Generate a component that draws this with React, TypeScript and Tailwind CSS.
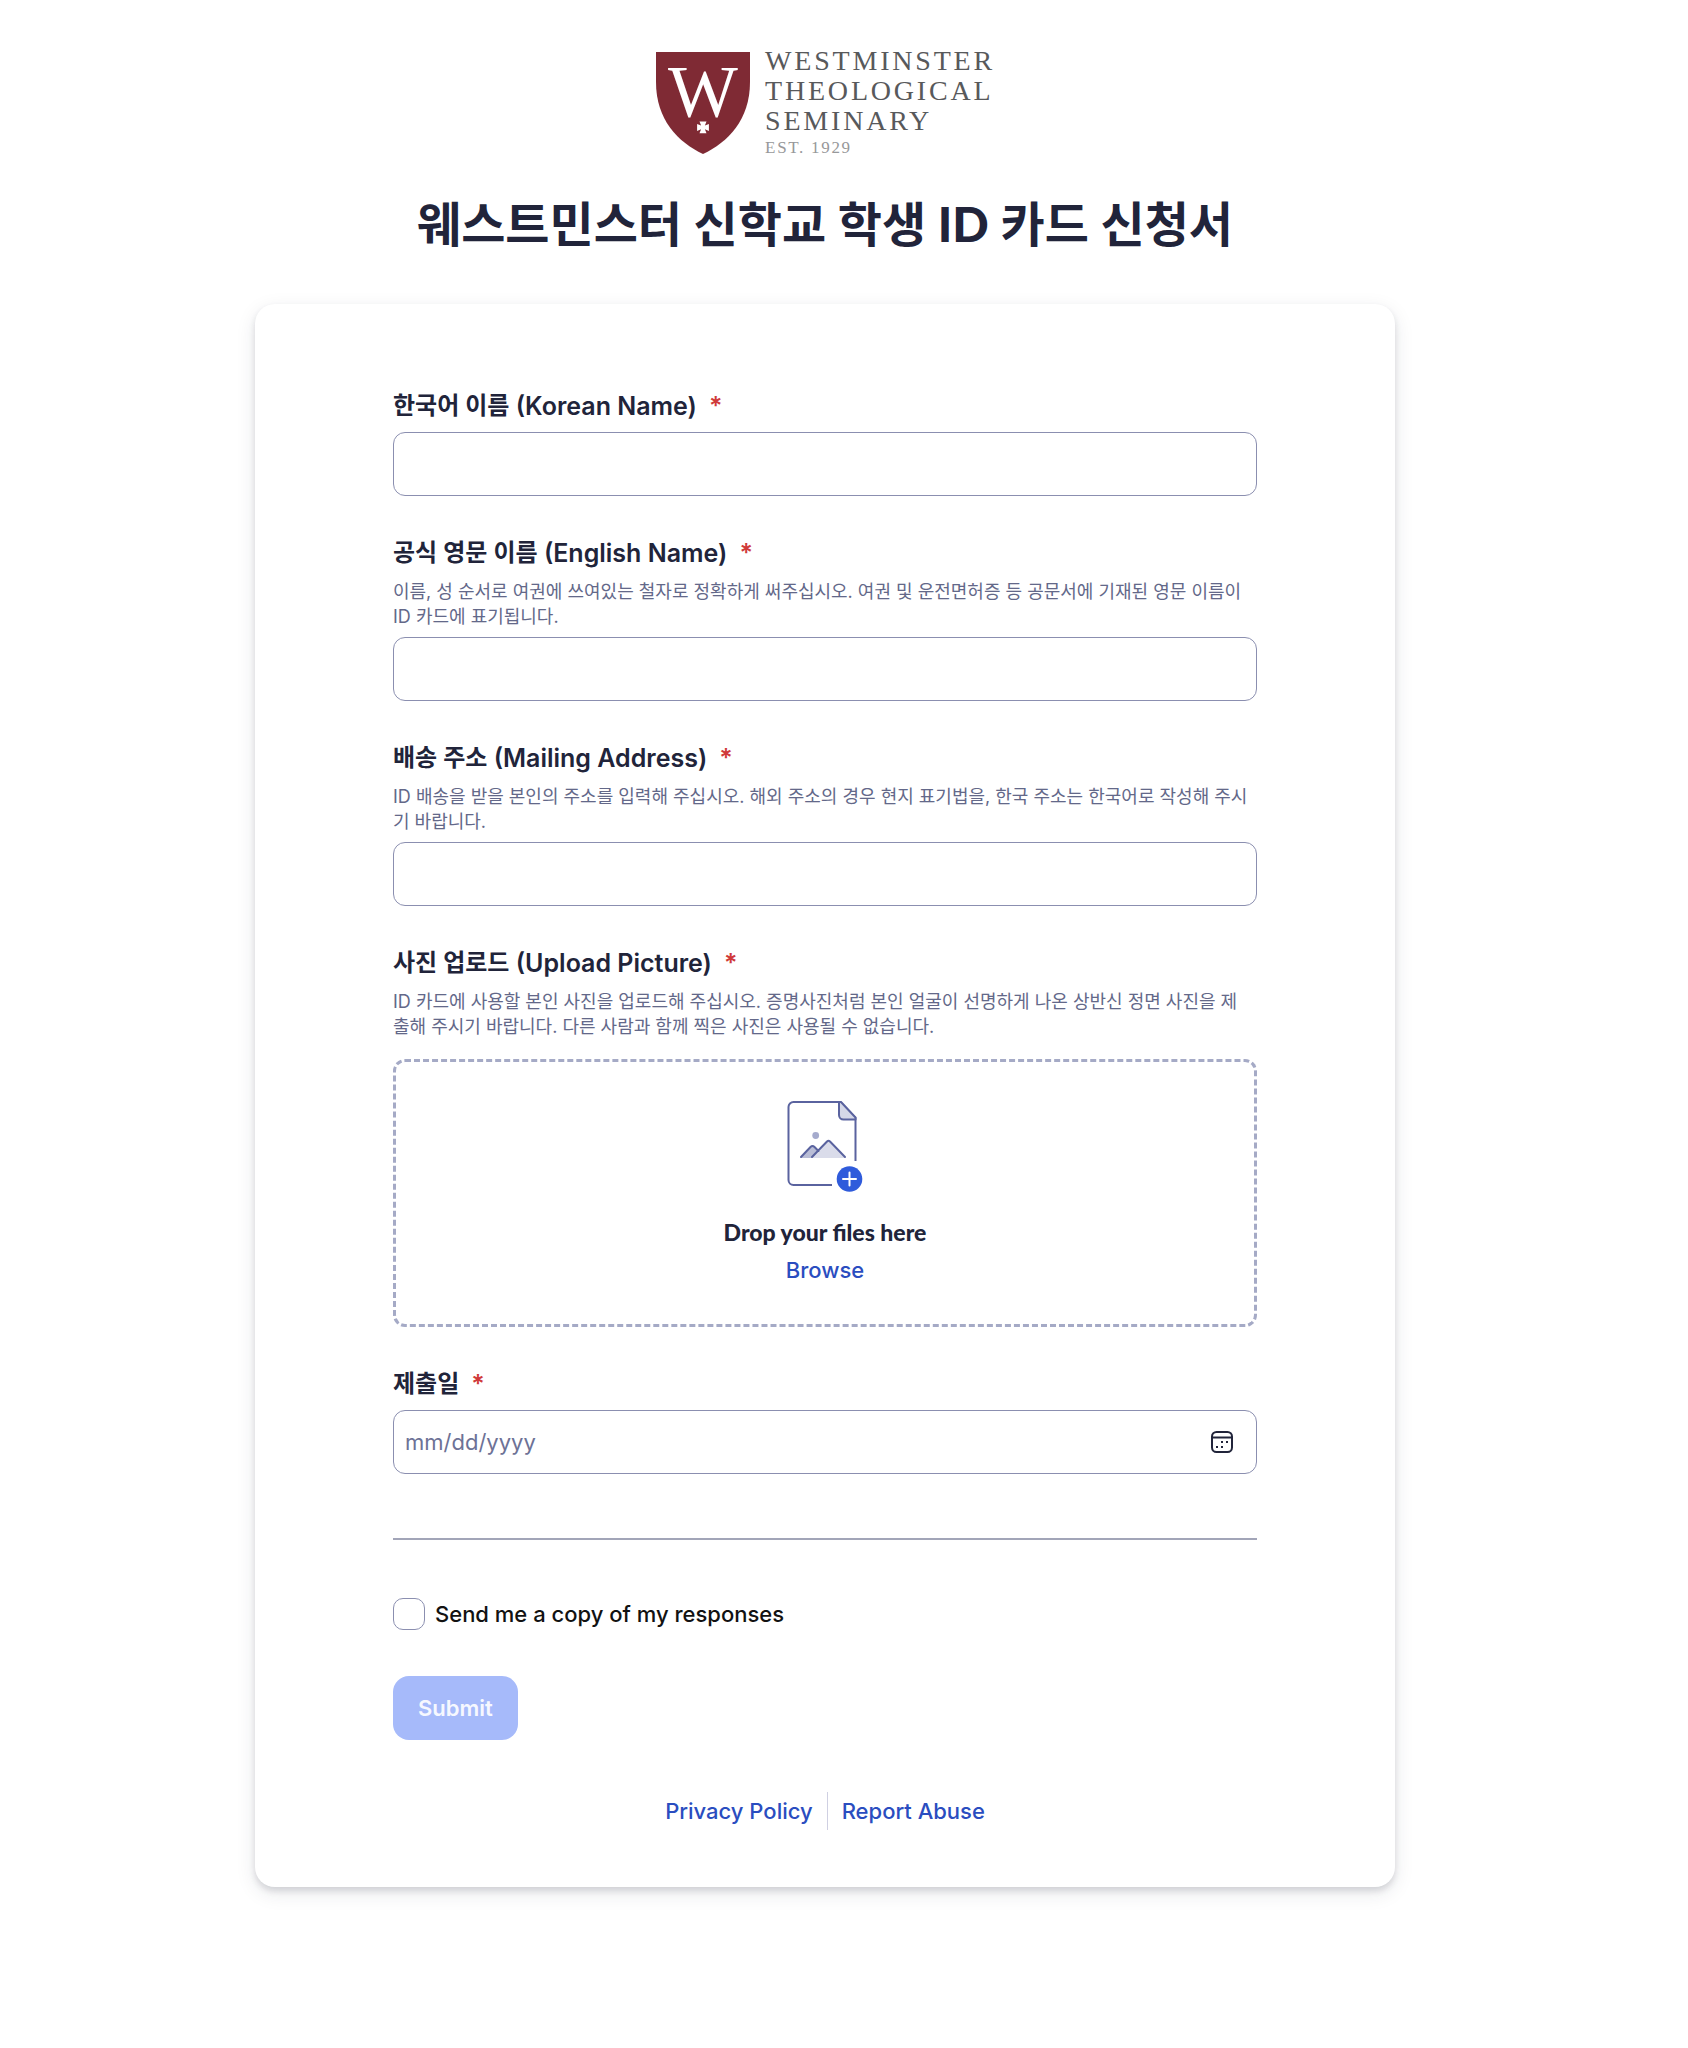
import React, { useState } from 'react';

const inputStyles =
  'block h-16 w-full rounded-xl border border-[#8b8fb0] bg-white px-3 text-[22px] text-[#21243a] outline-none';

interface FieldLabelProps {
  id: string;
  ko: string;
  en?: string;
}

const FieldLabel: React.FC<FieldLabelProps> = ({ id, ko, en }) => (
  <label htmlFor={id} className="flex h-8 items-center whitespace-pre text-[24px] leading-8 font-semibold text-[#21243a]">
    <span>{ko}</span>
    {en && <span className="text-[25px]"> {en}</span>}
    <span className="ml-3 text-[25px] text-[#d03a3a]">*</span>
  </label>
);

interface HintProps {
  id: string;
  lines: string[];
}

const Hint: React.FC<HintProps> = ({ id, lines }) => (
  <p id={id} className="mt-[10px] text-[18px] leading-[25px] text-[#636889] sm:whitespace-nowrap">
    {lines.map((line) => (
      <span key={line} className="block">{line}</span>
    ))}
  </p>
);

const Logo = () => (
  <div className="flex items-center justify-center gap-[14px]">
    <svg width="96" height="102" viewBox="0 0 96 102" className="overflow-visible" aria-hidden="true">
      <path d="M1 0H95V30C95 68 73 90 48 102C23 90 1 68 1 30Z" fill="#7f2a34" />
      <text x="48" y="65" textAnchor="middle" fontFamily="Liberation Serif, serif" fontSize="74" fill="#fff">W</text>
      <path
        d="M44.500 69.500h7l-1.600 4 4-1.600v7l-4-1.600 1.600 4h-7l1.600-4-4 1.600v-7l4 1.600Z"
        fill="#fff"
      />
    </svg>
    <div className="font-['Liberation_Serif',serif] text-[28px] leading-[30px] tracking-widest text-[#58595b]">
      <div>WESTMINSTER</div>
      <div>THEOLOGICAL</div>
      <div>SEMINARY</div>
      <div className="text-[17px] leading-6 tracking-widest text-[#97989a]">EST. 1929</div>
    </div>
  </div>
);

const ImageFileIcon = () => (
  <svg width="80" height="96" viewBox="0 0 80 96" fill="none" aria-hidden="true">
    <path
      d="M47 87H8.500a5 5 0 0 1-5-5V9a5 5 0 0 1 5-5H55.500L70.500 20V63"
      stroke="#5a639f"
      strokeWidth="2"
    />
    <path d="M54 4V17a4.500 4.500 0 0 0 4.500 4.500H70.500V19.500L56 4Z" fill="#d5d8e8" stroke="#5a639f" strokeWidth="2" strokeLinejoin="round" />
    <circle cx="30.700" cy="37.500" r="3.400" fill="#a5abcd" />
    <path d="M15.500 60L25.500 48.500Q27.500 46.500 29.500 48.500L34 53L27 60Z" fill="#b9bdd6" />
    <path d="M27 60L42 44Q43.500 42.500 45 44L60.500 60Z" fill="#dadcea" />
    <path
      d="M16 59L25.500 49Q27.500 47 29.500 49L33.500 53M27 59L42 43.500Q43.500 42 45 43.500L60 59"
      stroke="#5a639f"
      strokeWidth="2"
      strokeLinecap="round"
    />
    <circle cx="64.500" cy="81" r="12.800" fill="#2f5bdb" />
    <path d="M64.500 74.500V87.500M58 81H71" stroke="#fff" strokeWidth="2" strokeLinecap="round" />
  </svg>
);

const CalendarIcon = () => (
  <svg width="24" height="24" viewBox="0 0 24 24" fill="none" aria-hidden="true">
    <rect x="2" y="2" width="20" height="20" rx="4.500" stroke="#21243a" strokeWidth="2" />
    <path d="M2 7.500H22" stroke="#21243a" strokeWidth="2" />
    <path d="M11 11h2v2h-2zM16 11h2v2h-2zM6 16h2v2H6zM11 16h2v2h-2z" fill="#21243a" />
  </svg>
);

const App: React.FC = () => {
  const [koreanName, setKoreanName] = useState('');
  const [englishName, setEnglishName] = useState('');
  const [address, setAddress] = useState('');
  const [date, setDate] = useState('');
  const [sendCopy, setSendCopy] = useState(false);

  return (
    <div className="min-h-screen bg-white pt-[46px] pb-40 font-['Inter','Noto_Sans_CJK_KR',sans-serif] lg:pr-[38px]">
      <header>
        <Logo />
        <h1 className="mt-[34px] text-center font-['Lato','Noto_Sans_CJK_KR',sans-serif] text-[48px] leading-[60px] font-bold text-[#21243a]">
          웨스트민스터 신학교 학생 <span className="font-black">ID</span> 카드 신청서
        </h1>
      </header>

      <main className="mx-auto mt-[50px] max-w-[1140px] rounded-[20px] bg-white px-6 pt-[86px] pb-[57px] shadow-[0_4px_6px_rgba(33,36,58,0.14),0_6px_20px_rgba(33,36,58,0.10)] lg:px-[138px]">
        <form onSubmit={(e) => e.preventDefault()}>
          <div className="flex flex-col gap-[41px]">
            <div>
              <FieldLabel id="korean-name" ko="한국어 이름" en="(Korean Name)" />
              <input
                id="korean-name"
                type="text"
                value={koreanName}
                onChange={(e) => setKoreanName(e.target.value)}
                className={`${inputStyles} mt-[10px]`}
              />
            </div>

            <div>
              <FieldLabel id="english-name" ko="공식 영문 이름" en="(English Name)" />
              <Hint
                id="english-name-hint"
                lines={[
                  '이름, 성 순서로 여권에 쓰여있는 철자로 정확하게 써주십시오. 여권 및 운전면허증 등 공문서에 기재된 영문 이름이',
                  'ID 카드에 표기됩니다.'
                ]}
              />
              <input
                id="english-name"
                type="text"
                aria-describedby="english-name-hint"
                value={englishName}
                onChange={(e) => setEnglishName(e.target.value)}
                className={`${inputStyles} mt-2`}
              />
            </div>

            <div>
              <FieldLabel id="address" ko="배송 주소" en="(Mailing Address)" />
              <Hint
                id="address-hint"
                lines={[
                  'ID 배송을 받을 본인의 주소를 입력해 주십시오. 해외 주소의 경우 현지 표기법을, 한국 주소는 한국어로 작성해 주시',
                  '기 바랍니다.'
                ]}
              />
              <input
                id="address"
                type="text"
                aria-describedby="address-hint"
                value={address}
                onChange={(e) => setAddress(e.target.value)}
                className={`${inputStyles} mt-2`}
              />
            </div>

            <div>
              <FieldLabel id="picture" ko="사진 업로드" en="(Upload Picture)" />
              <Hint
                id="picture-hint"
                lines={[
                  'ID 카드에 사용할 본인 사진을 업로드해 주십시오. 증명사진처럼 본인 얼굴이 선명하게 나온 상반신 정면 사진을 제',
                  '출해 주시기 바랍니다. 다른 사람과 함께 찍은 사진은 사용될 수 없습니다.'
                ]}
              />
              <div className="mt-5 flex flex-col items-center rounded-xl border-3 border-dashed border-[#a5aac6] pt-9 pb-10">
                <ImageFileIcon />
                <p className="mt-6 font-['Lato',sans-serif] text-[23px] leading-7 font-black text-[#21243a]">
                  Drop your files here
                </p>
                <input id="picture" type="file" accept="image/*" className="sr-only" />
                <button
                  type="button"
                  onClick={() => document.getElementById('picture')?.click()}
                  className="mt-[10px] cursor-pointer text-[22px] leading-7 font-medium text-[#2a4dc0]"
                >
                  Browse
                </button>
              </div>
            </div>

            <div>
              <FieldLabel id="date" ko="제출일" />
              <div className="mt-[10px] flex h-16 items-center rounded-xl border border-[#8b8fb0] pr-[22px] pl-[11px]">
                <input
                  id="date"
                  type="text"
                  placeholder="mm/dd/yyyy"
                  value={date}
                  onChange={(e) => setDate(e.target.value)}
                  className="min-w-0 flex-1 text-[22px] text-[#21243a] outline-none placeholder:text-[#6d7296]"
                />
                <button type="button" aria-label="Choose date">
                  <CalendarIcon />
                </button>
              </div>
            </div>
          </div>

          <hr className="mt-16 border-t-2 border-[#a2a5b8]" />

          <label className="mt-[58px] flex h-8 items-center gap-[10px] text-[22px] font-medium text-[#121212]">
            <input
              type="checkbox"
              checked={sendCopy}
              onChange={(e) => setSendCopy(e.target.checked)}
              className="size-8 appearance-none rounded-[10px] border border-[#8b8fb0] bg-white checked:bg-[#2f5bdb]"
            />
            Send me a copy of my responses
          </label>

          <button
            type="submit"
            disabled
            className="mt-[46px] h-16 rounded-2xl bg-[#a6bafa] px-[25px] text-[22px] font-semibold text-[#f6f8ff]"
          >
            Submit
          </button>
        </form>

        <footer className="mt-[52px] flex h-[38px] items-center justify-center text-[22px] font-medium text-[#2a4dc0]">
          <a href="#privacy" className="pr-[14px]">Privacy Policy</a>
          <a href="#abuse" className="border-l border-[#cfd0e2] pl-[14px] leading-[38px]">Report Abuse</a>
        </footer>
      </main>
    </div>
  );
};

export default App;
